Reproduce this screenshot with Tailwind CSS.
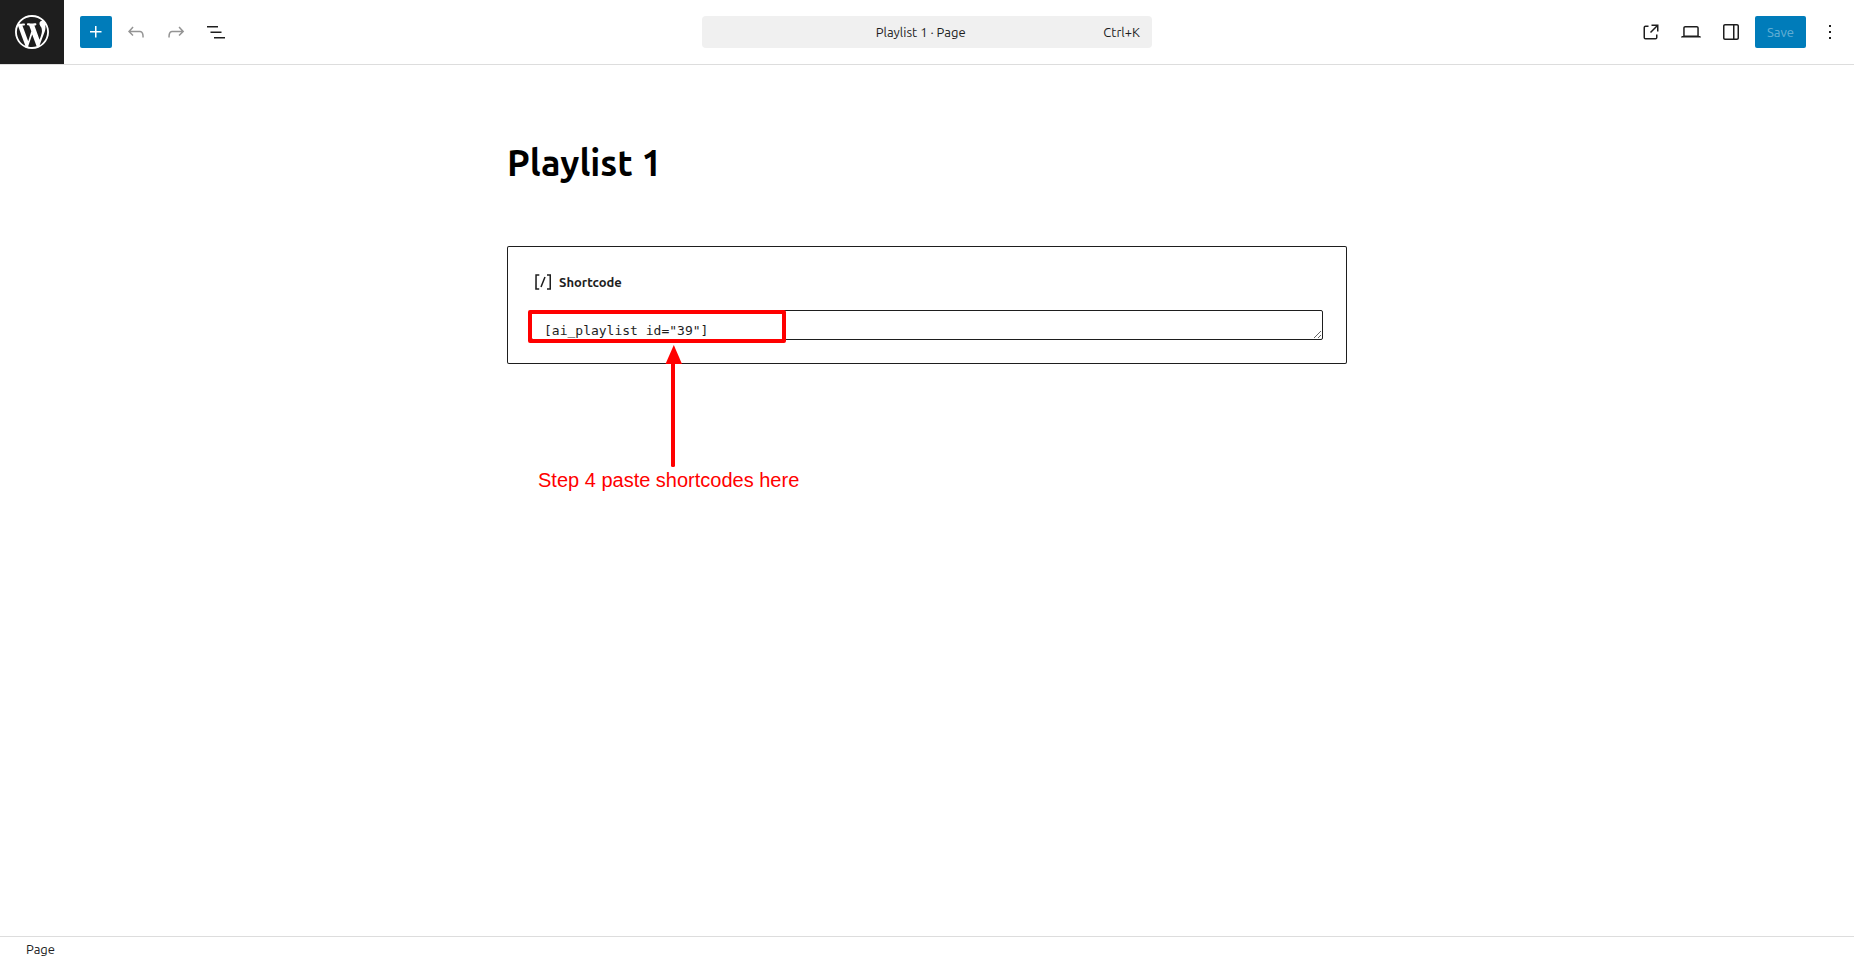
<!DOCTYPE html>
<html lang="en">
<head>
    <meta charset="UTF-8">
    <meta name="viewport" content="width=device-width, initial-scale=1.0">
    <title>Playlist 1 - Page</title>
    <script src="https://cdn.jsdelivr.net/npm/@tailwindcss/browser@4"></script>
</head>
<body class="flex min-h-screen flex-col bg-white font-['Ubuntu','Noto_Sans',sans-serif] text-[13px] leading-[normal] text-[#1e1e1e]">
    <!-- Header -->
    <header class="grid h-[65px] grid-cols-[1fr_450px_1fr] items-center border-b border-[#ddd]">
        <div class="flex items-center gap-4">
            <a href="#" aria-label="View Pages" class="flex size-16 items-center justify-center bg-[#1e1e1e] text-white">
                <svg class="size-[34px]" viewBox="0 0 20 20" fill="currentColor"><path d="M20 10c0-5.51-4.49-10-10-10C4.48 0 0 4.49 0 10c0 5.52 4.48 10 10 10 5.51 0 10-4.48 10-10zM7.78 15.37L4.37 6.22c.55-.02 1.17-.08 1.17-.08.5-.06.44-1.13-.06-1.11 0 0-1.45.11-2.37.11-.18 0-.37 0-.58-.01C4.12 2.69 6.87 1.11 10 1.11c2.33 0 4.45.87 6.05 2.34-.68-.11-1.65.39-1.65 1.58 0 .74.45 1.36.9 2.1.35.61.55 1.36.55 2.46 0 1.49-1.4 5-1.4 5l-3.03-8.37c.54-.02.82-.17.82-.17.5-.05.44-1.25-.06-1.22 0 0-1.44.12-2.38.12-.87 0-2.33-.12-2.33-.12-.5-.03-.56 1.2-.06 1.22l.92.08 1.26 3.41zM17.41 10c.24-.64.74-1.87.43-4.25.7 1.29 1.05 2.71 1.05 4.25 0 3.29-1.73 6.24-4.4 7.78.97-2.59 1.94-5.2 2.92-7.78zM6.1 18.09C3.12 16.65 1.11 13.53 1.11 10c0-1.3.23-2.48.72-3.59C3.25 10.3 4.67 14.2 6.1 18.09zm4.03-6.63l2.58 6.98c-.86.29-1.76.45-2.71.45-.79 0-1.57-.11-2.29-.33.81-2.38 1.62-4.74 2.42-7.1z"/></svg>
            </a>
            <div class="flex items-center gap-2">
                <button type="button" aria-label="Block Inserter" class="flex size-8 items-center justify-center rounded-xs bg-[#007cba] text-white">
                    <svg class="size-6" viewBox="0 0 24 24" fill="currentColor"><path d="M11 12.5V17.5H12.5V12.5H17.5V11H12.5V6H11V11H6V12.5H11Z"/></svg>
                </button>
                <button type="button" aria-label="Undo" disabled class="flex size-8 items-center justify-center text-[#949494]">
                    <svg class="size-6" viewBox="0 0 24 24" fill="currentColor"><path d="M18.3 11.7c-.6-.6-1.4-.9-2.3-.9H6.7l2.9-3.3-1.1-1-4.5 5L8.5 16l1-1-2.7-2.7H16c.5 0 .9.2 1.3.5 1 1 1 3.4 1 4.5v.3h1.5v-.2c0-1.5 0-4.3-1.5-5.7z"/></svg>
                </button>
                <button type="button" aria-label="Redo" disabled class="flex size-8 items-center justify-center text-[#949494]">
                    <svg class="size-6" viewBox="0 0 24 24" fill="currentColor"><path d="M15.6 6.5l-1.1 1 2.9 3.3H8c-.9 0-1.7.3-2.3.9-1.4 1.5-1.4 4.2-1.4 5.6v.2h1.5v-.3c0-1.1 0-3.5 1-4.5.3-.3.7-.5 1.3-.5h9.2L14.5 15l1.1 1.1 4.6-4.6-4.6-5z"/></svg>
                </button>
                <button type="button" aria-label="Document Overview" class="flex size-8 items-center justify-center">
                    <svg class="size-6" viewBox="0 0 24 24" fill="currentColor"><path d="M3 6h11v1.5H3V6Zm3.5 5.5h11V13h-11v-1.5ZM21 17H10v1.5h11V17Z"/></svg>
                </button>
            </div>
        </div>

        <button type="button" class="flex h-8 items-center rounded-sm bg-[#f0f0f0] pr-3 pl-9">
            <span class="flex-1 text-center">Playlist 1 · Page</span>
            <span>Ctrl+K</span>
        </button>

        <div class="flex items-center justify-end gap-2 pr-2">
            <a href="#" aria-label="View Page" class="flex size-8 items-center justify-center">
                <svg class="size-6" viewBox="0 0 24 24" fill="currentColor"><path d="M19.5 4.5h-7V6h4.44l-5.97 5.97 1.06 1.06L18 7.06v4.44h1.5v-7Zm-13 1a2 2 0 0 0-2 2v10a2 2 0 0 0 2 2h10a2 2 0 0 0 2-2v-3H17v3a.5.5 0 0 1-.5.5h-10a.5.5 0 0 1-.5-.5v-10a.5.5 0 0 1 .5-.5h3V5.5h-3Z"/></svg>
            </a>
            <button type="button" aria-label="View" class="flex size-8 items-center justify-center">
                <svg class="size-6" viewBox="0 0 24 24" fill="currentColor"><path d="M20.5 16h-.7V8c0-1.1-.9-2-2-2H6.2c-1.1 0-2 .9-2 2v8h-.7c-.8 0-1.5.7-1.5 1.5h20c0-.8-.7-1.5-1.5-1.5zM5.7 8c0-.3.2-.5.5-.5h11.6c.3 0 .5.2.5.5v7.6H5.7V8z"/></svg>
            </button>
            <button type="button" aria-label="Settings" class="flex size-8 items-center justify-center">
                <svg class="size-6" viewBox="0 0 24 24" fill="currentColor"><path d="M18 4H6c-1.1 0-2 .9-2 2v12c0 1.1.9 2 2 2h12c1.1 0 2-.9 2-2V6c0-1.1-.9-2-2-2zm-4 14.5H6c-.3 0-.5-.2-.5-.5V6c0-.3.2-.5.5-.5h8v13zm4.5-.5c0 .3-.2.5-.5.5h-2.5v-13H18c.3 0 .5.2.5.5v12z"/></svg>
            </button>
            <button type="button" disabled class="h-8 w-[51px] rounded-xs bg-[#007cba] text-white/40">Save</button>
            <button type="button" aria-label="Options" class="flex size-8 items-center justify-center">
                <svg class="size-6" viewBox="0 0 24 24" fill="currentColor"><path d="M13 19h-2v-2h2v2zm0-6h-2v-2h2v2zm0-6h-2V5h2v2z"/></svg>
            </button>
        </div>
    </header>

    <!-- Editor canvas -->
    <main class="flex-1 px-6 pt-[73px]">
        <div class="mx-auto max-w-[840px]">
            <h1 class="text-[36px] leading-[50px] font-semibold text-black">Playlist 1</h1>

            <div class="mt-[58px] rounded-xs p-6 inset-ring inset-ring-[#1e1e1e]">
                <label for="shortcode" class="flex h-6 items-center gap-1 font-semibold">
                    <svg class="size-6" viewBox="0 0 24 24" fill="currentColor"><path d="M16 4.2v1.5h2.5v12.5H16v1.5h4V4.2h-4zM4.2 19.8h4v-1.5H5.8V5.8h2.5V4.2h-4l-.1 15.6zm5.1-3.1l1.4.6 4-10-1.4-.6-4 10z"/></svg>
                    Shortcode
                </label>
                <div class="relative mt-4">
                    <textarea id="shortcode" rows="1" class="block h-[30px] w-full overflow-hidden rounded-xs border border-[#1e1e1e] p-3 font-['DejaVu_Sans_Mono',monospace] text-[13px] leading-[15px]">[ai_playlist id="39"]</textarea>

                    <!-- Annotation: frame, arrow and note -->
                    <div class="pointer-events-none absolute top-0 -left-[3px] w-[270px] text-[#f00]">
                        <div class="h-[33px] w-[258px] rounded-xs border-4 border-[#f00]"></div>
                        <svg class="mt-[2px] ml-[137px] h-[123px] w-[18px]" viewBox="0 0 18 123" fill="currentColor">
                            <path d="M8.8 0L17 19H.5z"/>
                            <rect x="6" y="16" width="4" height="106" rx="1.5"/>
                        </svg>
                        <p class="ml-[10px] font-['Liberation_Sans',sans-serif] text-[20px] leading-[24px] whitespace-nowrap">Step 4 paste shortcodes here</p>
                    </div>
                </div>
            </div>
        </div>
    </main>

    <!-- Breadcrumb footer -->
    <footer class="flex h-[25px] items-center border-t border-[#ddd] px-[26px]">Page</footer>
</body>
</html>
